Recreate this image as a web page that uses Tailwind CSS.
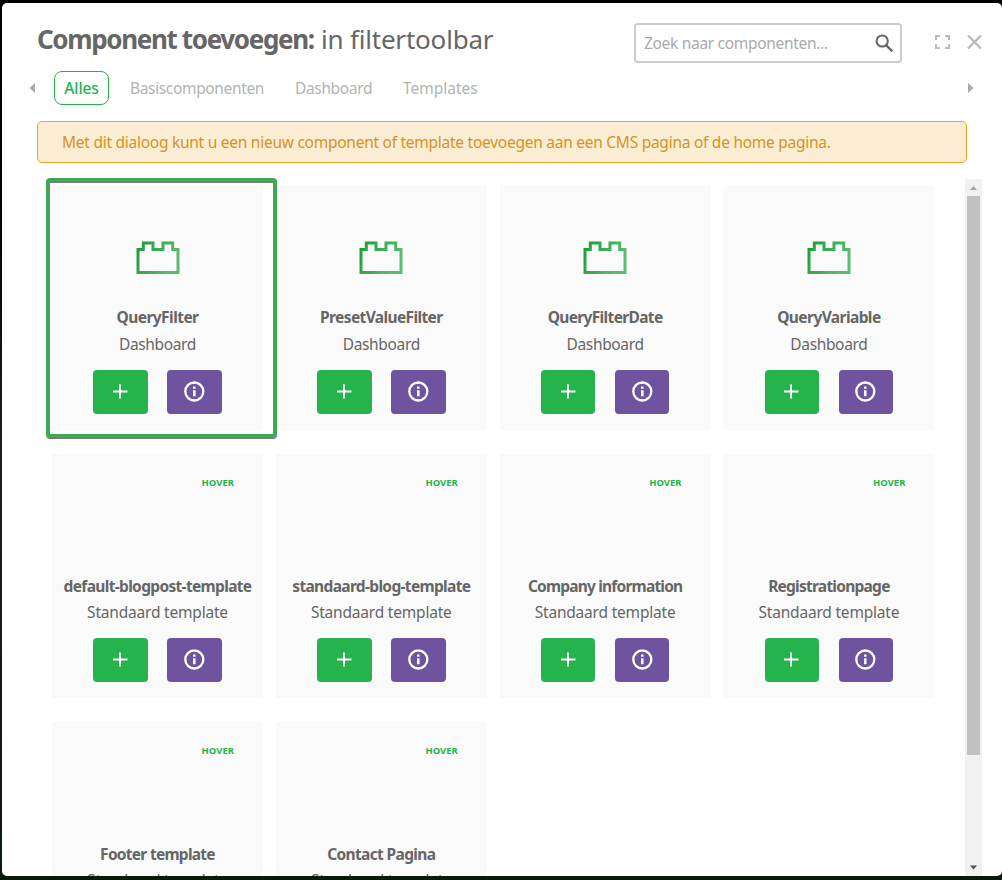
<!DOCTYPE html>
<html lang="nl">
<head>
<meta charset="utf-8">
<title>Component toevoegen</title>
<script src="https://cdn.jsdelivr.net/npm/@tailwindcss/browser@4"></script>
</head>
<body class="h-[880px] overflow-hidden bg-linear-to-b from-black via-[#1c1d1f] to-[#0b190d] pt-[3px] pl-[2px] font-['Noto_Sans',sans-serif] text-[#666]">
<svg width="0" height="0" class="absolute">
  <defs>
    <linearGradient id="g" x1="0" y1="0" x2="1" y2="0.4"><stop offset="0" stop-color="#1b9c37"/><stop offset="1" stop-color="#5dbb70"/></linearGradient>
  </defs>
</svg>
<main class="flex h-[873px] w-[1000px] flex-col overflow-hidden rounded-[5px] bg-white pl-[35px]">
  <header class="flex h-[65px] shrink-0 pt-[20px]">
    <h1 class="h-[40px] w-[597px] text-[26px] leading-[33px] whitespace-nowrap"><b class="inline-block w-[284px] tracking-[-1.35px]">Component toevoegen:</b><span class="tracking-[-0.2px]">in filtertoolbar</span></h1>
    <div class="flex h-[40px] w-[268px] items-center justify-between rounded-[4px] border-2 border-[#ccc] pr-[6px] pl-[8px]">
      <span class="pt-px text-[15.5px] tracking-[-0.31px] text-[#aaa]">Zoek naar componenten...</span>
      <svg class="h-[19px] w-[19px]" viewBox="0 0 19 19" fill="none" stroke="#666" stroke-width="2"><circle cx="7.2" cy="7" r="5.6"/><path d="M11 11l6.300 6.300" stroke-width="2.400"/></svg>
    </div>
    <svg class="mt-[12px] ml-[33px] h-[14px] w-[15px]" viewBox="0 0 15 14" fill="none" stroke="#bbb" stroke-width="2"><path d="M1 5V1H5M10 1h4v4M14 9v4h-4M5 13H1V9"/></svg>
    <svg class="mt-[12px] ml-[17px] h-[14px] w-[15px]" viewBox="0 0 15 14" fill="none" stroke="#bbb" stroke-width="2.400"><path d="M1 .5l13 13M14 .5l-13 13"/></svg>
  </header>
  <nav class="-ml-[8px] flex h-[40px] w-[945px] shrink-0 items-center text-[15.5px] whitespace-nowrap text-[#b3b3b3]">
    <svg class="h-[10px] w-[6px]" viewBox="0 0 6 10"><path d="M6 0v10L0.500 5z" fill="#aaa"/></svg>
    <span class="ml-[19px] h-[34px] w-[55px] rounded-[8px] border border-[#25b34b] text-center leading-[33px] font-medium tracking-[-0.1px] text-[#25b34b]">Alles</span>
    <span class="ml-[21px] w-[165px] pt-[2px] tracking-[-0.35px]">Basiscomponenten</span>
    <span class="w-[108px] pt-[2px] tracking-[-0.35px]">Dashboard</span>
    <span class="pt-[2px]">Templates</span>
    <svg class="ml-auto h-[10px] w-[6px]" viewBox="0 0 6 10"><path d="M0 0v10l5.500-5z" fill="#aaa"/></svg>
  </nav>
  <p class="mt-[13px] h-[42px] w-[930px] shrink-0 rounded-[5px] border border-[#eca521] bg-[#fbedd3] pl-[24px] text-[15.5px] leading-[41px] tracking-[-0.26px] whitespace-nowrap text-[#d3941c]">Met dit dialoog kunt u een nieuw component of template toevoegen aan een CMS pagina of de home pagina.</p>
  <div class="mt-[16px] flex min-h-0 grow">
    <section id="cards" class="mt-[6px] ml-[15px] grid w-[913px] auto-rows-[244.6px] grid-cols-[repeat(4,211px)] gap-x-[12.8px] gap-y-[24px]"></section>
    <div class="flex h-full w-[17px] flex-col items-center bg-[#f1f1f1]">
      <svg class="h-[17px] w-[17px] shrink-0" viewBox="0 0 17 17"><path d="M5 11L8.5 7L12 11z" fill="#a3a3a3"/></svg>
      <div class="h-[559px] w-[13px] bg-[#c1c1c1]"></div>
      <svg class="mt-auto h-[17px] w-[17px]" viewBox="0 0 17 17"><path d="M5 6.500L8.500 10.500L12 6.500z" fill="#505050"/></svg>
    </div>
  </div>
</main>
<script>
const brick = '<svg class="mx-auto h-[34px] w-[44px]" viewBox="0 0 44 34" fill="none" stroke="url(#g)" stroke-width="3"><path d="M2 31.500V8.500H7.300V2H17V8.500H27V2H36.700V8.500H42V31.500Z"/></svg>';
const hover = '<span class="block pr-[29px] text-right text-[9.5px] leading-[14px] font-bold text-[#25b34b]">HOVER</span>';
const cards = [
  ['QueryFilter', 'tracking-[-0.55px]', 1], ['PresetValueFilter', 'tracking-[-0.62px]', 1], ['QueryFilterDate', 'tracking-[-0.65px]', 1], ['QueryVariable', 'tracking-[-0.58px]', 1],
  ['default-blogpost-template', 'tracking-[-0.66px]', 0], ['standaard-blog-template', 'tracking-[-0.66px]', 0], ['Company information', 'tracking-[-0.8px]', 0], ['Registrationpage', 'tracking-[-0.75px]', 0],
  ['Footer template', 'tracking-[-0.72px]', 0], ['Contact Pagina', 'tracking-[-0.65px]', 0]
];
document.getElementById('cards').innerHTML = cards.map(([name, track, dash], i) => `
<article class="relative ${i === 0 ? 'z-10' : ''} bg-[#fafafa] text-center whitespace-nowrap">
  ${i === 0 ? '<div class="absolute top-0 right-[-9px] h-full w-[9px] bg-white"></div><div class="absolute -top-[7px] -left-[6px] h-[260px] w-[231px] rounded-[4px] border-4 border-[#3daa50] shadow-[0_1px_0_#777,inset_0_1px_0_#777]"></div>' : ''}
  <div class="h-[119px] ${dash ? 'pt-[56px]' : 'pt-[22px]'}">${dash ? brick : hover}</div>
  <h2 class="h-[26px] text-[15.5px] leading-[26px] font-bold ${track}">${name}</h2>
  <p class="${dash ? 'pt-px tracking-[-0.35px]' : 'tracking-[-0.2px]'} h-[27px] text-[15.5px] leading-[26px]">${dash ? 'Dashboard' : 'Standaard template'}</p>
  <div class="${dash ? 'mt-[13px]' : 'mt-[12px]'} flex justify-center gap-[19.3px]">
    <span class="flex h-[44px] w-[54.7px] items-center justify-center rounded-[4px] bg-[#25b34b]"><svg class="${dash ? 'mb-[2px]' : 'mb-0'} h-[15px] w-[15px]" viewBox="0 0 15 15" stroke="#fff" stroke-width="2"><path d="M7 .5v14M0 7.500h14.500"/></svg></span>
    <span class="flex h-[44px] w-[54.7px] items-center justify-center rounded-[4px] bg-[#6f539f]"><svg class="${dash ? 'mb-[2px]' : 'mb-0'} h-[21px] w-[21px]" viewBox="0 0 21 21" fill="none" stroke="#fff" stroke-width="2.300"><circle cx="10.300" cy="10.500" r="9"/><path d="M10.300 9.300v6M10.300 5.500v2.200" stroke-width="2.500"/></svg></span>
  </div>
</article>`).join('');
</script>
</body>
</html>
